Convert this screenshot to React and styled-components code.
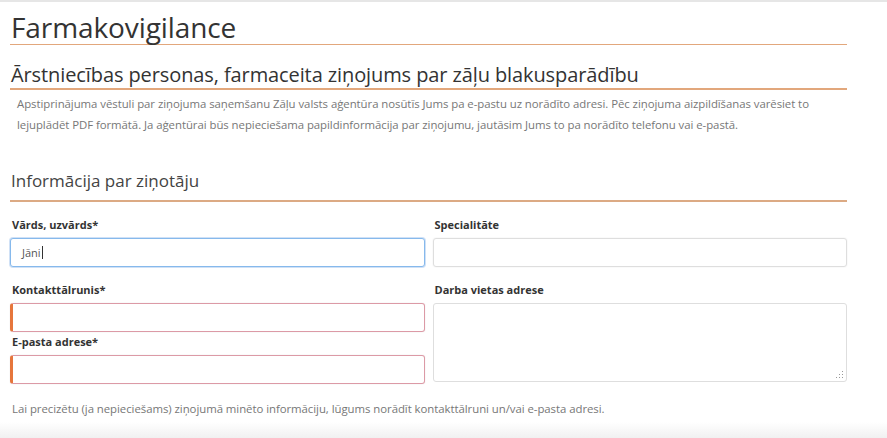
import React from 'react';
import styled, {createGlobalStyle} from 'styled-components';

const GlobalStyle = createGlobalStyle`
  html, body {
    margin: 0;
    padding: 0;
    background: #fff;
  }
  body {
    font-family: "Open Sans", "Noto Sans", sans-serif;
    color: #333;
  }
`

const Page = styled.div`
  width: 887px;
  height: 438px;
  overflow: hidden;
  box-sizing: border-box;
  border-top: 2px solid #e6e6e6;
  background: linear-gradient(to bottom, #fff 0, #fff 420px, #efefef 438px);
`

const Content = styled.div`
  width: 837px;
  margin-left: 10px;
`

const Title = styled.h1`
  margin: 0;
  padding: 9px 0 0 1px;
  font-size: 28px;
  font-weight: 400;
  line-height: 33px;
  letter-spacing: -0.1px;
  color: #333;
  border-bottom: 1px solid #e2a77c;
`

const Subtitle = styled.h2`
  margin: 0;
  padding: 16px 0 0 1px;
  font-size: 20px;
  font-weight: 400;
  line-height: 27px;
  letter-spacing: -0.1px;
  color: #333;
  border-bottom: 2px solid #e2a77c;
`

const Note = styled.p`
  margin: ${props => props.top || 0}px 0 0 ${props => props.indent || 0}px;
  font-size: 11.4px;
  line-height: 21px;
  color: #777;
  letter-spacing: -0.05px;
`

const Section = styled.h3`
  margin: 34px 0 0;
  padding-left: 1px;
  font-size: 17px;
  font-weight: 400;
  line-height: 23px;
  padding-bottom: 8px;
  color: #444;
  border-bottom: 2px solid #dcaa84;
`

const Grid = styled.div`
  display: grid;
  grid-template-columns: 1fr 1fr;
  column-gap: 8px;
  margin-top: 16px;
`

const Column = styled.div`
  display: flex;
  flex-direction: column;
`

const Label = styled.label`
  display: block;
  font-size: 11px;
  font-weight: 700;
  line-height: 14px;
  color: #333;
  padding-left: 2px;
  margin-top: ${props => props.top || 0}px;
  margin-bottom: 6px;
`

const Input = styled.div`
  box-sizing: border-box;
  height: 29px;
  border-radius: 3px;
  border: 1px solid ${props => props.state === 'focus' ? '#86b9ec' : props.state === 'error' ? '#dc9aa6' : '#dedede'};
  border-left: ${props => props.state === 'error' ? '3px solid #e6763c' : null};
  box-shadow: ${props => props.state === 'focus' ? '0 0 0 1px rgba(120,170,230,0.35)' : '0 0 0 1px rgba(0,0,0,0.02)'};
  font-size: 11px;
  color: #555;
  display: flex;
  align-items: center;
  padding-left: 11px;
  background: #fff;
`

const Caret = styled.span`
  display: inline-block;
  width: 1px;
  height: 13px;
  background: #333;
  margin-left: 1px;
`

const TextArea = styled.div`
  position: relative;
  box-sizing: border-box;
  height: 79px;
  border-radius: 3px;
  border: 1px solid #dedede;
  background: #fff;
`

const Grip = styled.svg`
  position: absolute;
  right: 2px;
  bottom: 2px;
`

const App = () => {
    return (
        <Page>
            <GlobalStyle/>
            <Content>
                <Title>Farmakovigilance</Title>
                <Subtitle>Ārstniecības personas, farmaceita ziņojums par zāļu blakusparādību</Subtitle>
                <Note top={3} indent={7}>
                    Apstiprinājuma vēstuli par ziņojuma saņemšanu Zāļu valsts aģentūra nosūtīs Jums pa e-pastu uz norādīto adresi. Pēc ziņojuma aizpildīšanas varēsiet to<br/>
                    lejuplādēt PDF formātā. Ja aģentūrai būs nepieciešama papildinformācija par ziņojumu, jautāsim Jums to pa norādīto telefonu vai e-pastā.
                </Note>
                <Section>Informācija par ziņotāju</Section>
                <Grid>
                    <Column>
                        <Label>Vārds, uzvārds*</Label>
                        <Input state="focus">Jāni<Caret/></Input>
                        <Label top={16}>Kontakttālrunis*</Label>
                        <Input state="error"/>
                        <Label top={3}>E-pasta adrese*</Label>
                        <Input state="error"/>
                    </Column>
                    <Column>
                        <Label>Specialitāte</Label>
                        <Input/>
                        <Label top={16}>Darba vietas adrese</Label>
                        <TextArea>
                            <Grip width="8" height="8" viewBox="0 0 8 8">
                                <g fill="#999">
                                    <rect x="6" y="0" width="1" height="1"/>
                                    <rect x="6" y="3" width="1" height="1"/>
                                    <rect x="3" y="3" width="1" height="1"/>
                                    <rect x="6" y="6" width="1" height="1"/>
                                    <rect x="3" y="6" width="1" height="1"/>
                                    <rect x="0" y="6" width="1" height="1"/>
                                </g>
                            </Grip>
                        </TextArea>
                    </Column>
                </Grid>
                <Note top={14} indent={2}>
                    Lai precizētu (ja nepieciešams) ziņojumā minēto informāciju, lūgums norādīt kontakttālruni un/vai e-pasta adresi.
                </Note>
            </Content>
        </Page>
    );
}

export default App;
